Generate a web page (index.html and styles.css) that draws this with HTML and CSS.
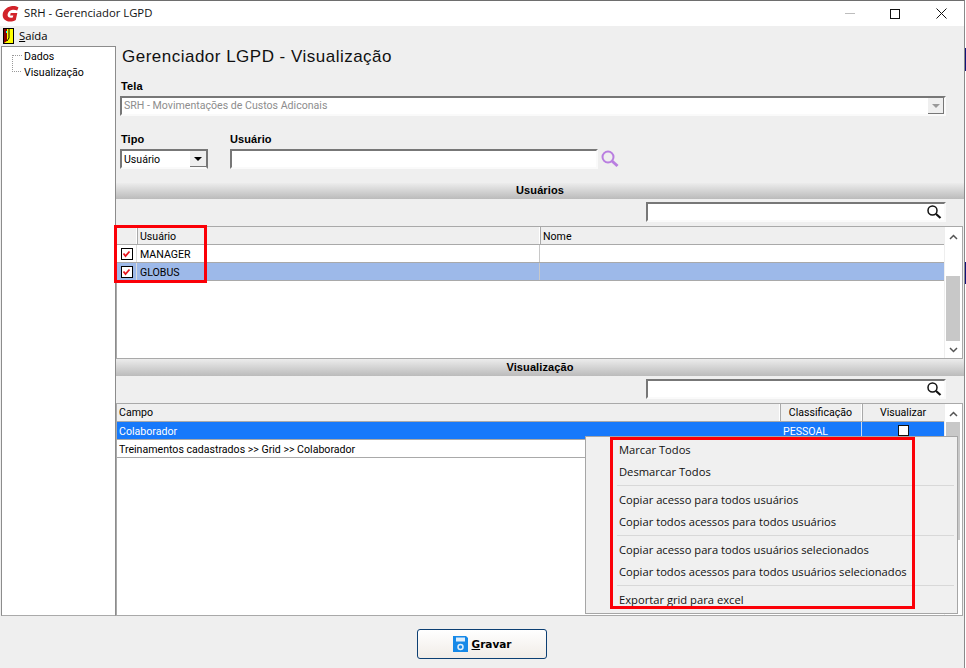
FILE: index.html
```html
<!DOCTYPE html>
<html lang="pt-BR">
<head>
<meta charset="utf-8">
<title>SRH - Gerenciador LGPD</title>
<link rel="stylesheet" href="styles.css">
</head>
<body>
<div class="window">
  <header class="titlebar">
    <svg class="app-logo" width="18" height="18" viewBox="0 0 18 18"><path d="M16.500 2.500C14 1 11.500.800 9 1.300 4.500 2.200 1.200 5.500.700 9.200c-.5 4.300 2.800 7.300 7.300 7.300 2 0 4-.5 5.800-1.600L15.300 8H8.700L8.100 10.500h3.200l-.5 2c-3 .8-5.500-.2-5.200-3C5.900 7 8 5 10.800 4.800c1.600-.1 3 .2 4.400.8z" fill="#d2232a"/></svg>
    <span class="title-text">SRH - Gerenciador LGPD</span>
    <div class="win-controls">
      <span class="wc wc-min"></span>
      <span class="wc wc-max"></span>
      <svg class="wc-close" width="11" height="11" viewBox="0 0 11 11"><path d="M.5.500l10 10M10.500.500l-10 10" stroke="#111" stroke-width="1" fill="none"/></svg>
    </div>
  </header>
  <nav class="menubar">
    <svg width="11" height="16" viewBox="0 0 11 16"><rect width="11" height="16" fill="#000"/><rect x="1" y="1" width="9" height="14" fill="#ffff00"/><path d="M1 1h3v12l-3 2z" fill="#8a0000"/><rect x="3" y="3" width="1" height="2" fill="#0ff"/><path d="M6 1v9l-2 3" stroke="#000" fill="none"/></svg>
    <span class="menu-item"><u>S</u>aída</span>
  </nav>
  <div class="content">
    <aside class="tree">
      <div class="tree-guide"></div>
      <div class="tree-item">Dados</div>
      <div class="tree-item">Visualização</div>
    </aside>
    <main class="main">
      <div class="form">
        <h1 class="heading">Gerenciador LGPD - Visualização</h1>
        <label class="lbl lbl-tela">Tela</label>
        <div class="sunken combo-tela">
          <span class="disabled-text">SRH - Movimentações de Custos Adiconais</span>
          <span class="drop disabled"><i class="arrow"></i></span>
        </div>
        <div class="row-tipo">
          <div class="col-tipo">
            <label class="lbl">Tipo</label>
            <div class="sunken combo-tipo"><span class="combo-value">Usuário</span><span class="drop"><i class="arrow"></i></span></div>
          </div>
          <div class="col-user">
            <label class="lbl">Usuário</label>
            <div class="user-line">
              <div class="sunken input-user"></div>
              <svg width="20" height="20" viewBox="0 0 20 20"><circle cx="8" cy="8" r="5.500" fill="none" stroke="#b97ee0" stroke-width="2"/><path d="M12 12l5.500 5" stroke="#b97ee0" stroke-width="3"/></svg>
            </div>
          </div>
        </div>
      </div>

      <div class="section-bar sb-users">Usuários</div>
      <div class="search-row">
        <div class="sunken search">
          <svg width="16" height="16" viewBox="0 0 16 16"><circle cx="6.500" cy="6.500" r="4.500" fill="none" stroke="#111" stroke-width="1.500"/><path d="M10 10l4.500 4" stroke="#111" stroke-width="2.200"/></svg>
        </div>
      </div>
      <section class="grid grid-users">
        <div class="grid-body">
          <div class="gr head head-users">
            <div class="c c-chk"></div><div class="c c-user">Usuário</div><div class="c c-fill">Nome</div>
          </div>
          <div class="gr">
            <div class="c c-chk"><span class="chk"><svg width="9" height="8" viewBox="0 0 9 8"><path d="M1.500 3.500l2 2.500L7.500 1.500" stroke="#e8141c" stroke-width="1.800" fill="none"/></svg></span></div><div class="c c-user">MANAGER</div><div class="c c-fill"></div>
          </div>
          <div class="gr sel-light">
            <div class="c c-chk"><span class="chk"><svg width="9" height="8" viewBox="0 0 9 8"><path d="M1.500 3.500l2 2.500L7.500 1.500" stroke="#e8141c" stroke-width="1.800" fill="none"/></svg></span></div><div class="c c-user">GLOBUS</div><div class="c c-fill"></div>
          </div>
        </div>
        <div class="scroll scroll-users">
          <svg class="sa" width="9" height="6" viewBox="0 0 9 6"><path d="M1 5l3.500-3.500L8 5" stroke="#555" stroke-width="1.500" fill="none"/></svg>
          <div class="thumb thumb-users"></div>
          <svg class="sa sa-down" width="9" height="6" viewBox="0 0 9 6"><path d="M1 1l3.500 3.500L8 1" stroke="#555" stroke-width="1.500" fill="none"/></svg>
        </div>
      </section>

      <div class="section-bar sb-vis">Visualização</div>
      <div class="search-row">
        <div class="sunken search">
          <svg width="16" height="16" viewBox="0 0 16 16"><circle cx="6.500" cy="6.500" r="4.500" fill="none" stroke="#111" stroke-width="1.500"/><path d="M10 10l4.500 4" stroke="#111" stroke-width="2.200"/></svg>
        </div>
      </div>
      <section class="grid grid-vis">
        <div class="grid-body">
          <div class="gr head">
            <div class="c c-campo">Campo</div><div class="c c-class ctr">Classificação</div><div class="c c-vis ctr">Visualizar</div>
          </div>
          <div class="gr sel-strong">
            <div class="c c-campo">Colaborador</div><div class="c c-class">PESSOAL</div><div class="c c-vis ctr"><span class="box"></span></div>
          </div>
          <div class="gr">
            <div class="c c-campo">Treinamentos cadastrados &gt;&gt; Grid &gt;&gt; Colaborador</div><div class="c c-class"></div><div class="c c-vis"></div>
          </div>
        </div>
        <div class="scroll scroll-vis">
          <svg class="sa" width="9" height="6" viewBox="0 0 9 6"><path d="M1 5l3.500-3.500L8 5" stroke="#555" stroke-width="1.500" fill="none"/></svg>
          <div class="thumb thumb-vis"></div>
        </div>
      </section>
    </main>
  </div>
  <footer class="footer">
    <button class="save" type="button">
      <svg width="15" height="16" viewBox="0 0 15 16"><path d="M0 0h13l2 2v14H0z" fill="#1689e8"/><rect x="3" y="1.500" width="9" height="4" fill="#dfeefb"/><circle cx="7.500" cy="11" r="2.500" fill="none" stroke="#dfeefb" stroke-width="1.500"/></svg>
      <span><u>G</u>ravar</span>
    </button>
  </footer>

  <div class="ctx">
    <div class="ctx-item">Marcar Todos</div>
    <div class="ctx-item">Desmarcar Todos</div>
    <div class="ctx-sep"></div>
    <div class="ctx-item">Copiar acesso para todos usuários</div>
    <div class="ctx-item">Copiar todos acessos para todos usuários</div>
    <div class="ctx-sep"></div>
    <div class="ctx-item">Copiar acesso para todos usuários selecionados</div>
    <div class="ctx-item">Copiar todos acessos para todos usuários selecionados</div>
    <div class="ctx-sep"></div>
    <div class="ctx-item">Exportar grid para excel</div>
  </div>
  <div class="mark mark-users"></div>
  <div class="mark mark-menu"></div>
</div>
<div class="edge"></div>
</body>
</html>
```
FILE: styles.css
```css
* { box-sizing: border-box; }
html, body { margin: 0; padding: 0; }
body {
  width: 966px; height: 668px; overflow: hidden; background: #fff; display: flex;
  font: 10.600px/14px Roboto, "Liberation Sans", sans-serif; color: #000;
}
.window {
  position: relative; width: 965px; height: 668px; background: #efefef;
  border-top: 1px solid #6e6e6e; border-right: 1px solid #8a8a8a;
  display: flex; flex-direction: column;
}
.edge {
  width: 1px; height: 668px;
  background: linear-gradient(#fff 48px, #12127a 48px, #12127a 71px, #fff 71px, #fff 262px, #12127a 262px, #12127a 284px, #fff 284px);
}
.titlebar { height: 25px; background: #fff; display: flex; align-items: center; padding-left: 2px; flex: none; }
.app-logo { margin-right: 4px; }
.title-text { font: 11.300px "Open Sans", sans-serif; color: #111; padding-bottom: 2px; }
.win-controls { margin-left: auto; display: flex; align-items: center; }
.wc-min { width: 10px; height: 1px; background: #bdbdbd; margin-right: 35px; }
.wc-max { width: 10px; height: 10px; border: 1px solid #111; margin-right: 36px; }
.wc-close { margin-right: 17px; }
.menubar { height: 20px; flex: none; display: flex; align-items: center; padding-left: 3px; gap: 5px; background: #efefef; }
.menu-item { font: 11.300px "Open Sans", sans-serif; padding-bottom: 2px; }
.content { flex: none; height: 570px; display: flex; }
.tree { position: relative; width: 115px; margin-left: 1px; background: #fff; border: 1px solid #8c8c8c; border-bottom-color: #aaa; padding: 2px 0 0 22px; flex: none; }
.tree-item { height: 16px; line-height: 15px; }
.tree-guide { position: absolute; left: 10px; top: 8px; width: 9px; height: 17px; border-left: 1px dotted #999; border-bottom: 1px dotted #999; }
.tree-guide::before { content: ""; position: absolute; left: 0; top: 0; width: 9px; border-top: 1px dotted #999; }
.main { flex: 1; min-width: 0; display: flex; flex-direction: column; }
.form { height: 137px; flex: none; padding: 0 0 0 4px; }
.heading { margin: 0; height: 30px; padding: 1px 0 0 2px; font: 400 17px/20px "Liberation Sans", sans-serif; letter-spacing: .49px; color: #111; }
.lbl { display: block; font: 700 11px/14px "Liberation Sans", sans-serif; height: 14px; letter-spacing: .1px; }
.lbl-tela { margin: 3px 0 3px 1px; }
.sunken { background: #fff; border: 2px solid; border-color: #777 #fafafa #fafafa #777; }
.combo-tela { width: 826px; height: 20px; display: flex; align-items: center; padding-left: 2px; }
.disabled-text { color: #8d8d8d; flex: 1; }
.drop { width: 16px; height: 16px; background: #efefef; border-right: 1px solid #777; border-bottom: 1px solid #777; display: flex; align-items: center; justify-content: center; }
.arrow { width: 0; height: 0; border: 4px solid transparent; border-top: 4px solid #000; border-bottom: 0; }
.drop.disabled .arrow { border-top-color: #999; }
.row-tipo { display: flex; margin-top: 16px; }
.col-tipo { width: 110px; }
.col-tipo .lbl, .col-user .lbl { margin-bottom: 3px; }
.col-tipo .lbl { margin-left: 1px; }
.combo-tipo { width: 88px; height: 20px; display: flex; align-items: center; justify-content: space-between; padding-left: 2px; border-right-color: #777; }
.combo-value { padding-top: 1px; }
.combo-tipo .drop { border-right: 0; }
.user-line { display: flex; align-items: center; gap: 2px; }
.input-user { width: 368px; height: 20px; }
.section-bar { height: 17px; flex: none; text-align: center; font: 700 11px/16px "Liberation Sans", sans-serif; letter-spacing: .1px; background: linear-gradient(#ececec, #bbb); }
.sb-users { height: 16px; line-height: 14px; }
.search-row { height: 27px; flex: none; display: flex; justify-content: flex-end; padding: 3px 18px 3px 0; }
.search { width: 300px; height: 20px; display: flex; justify-content: flex-end; align-items: center; padding-right: 2px; }
.grid { display: flex; flex: none; border: 1px solid #a9a9a9; background: #fff; margin: 0 1px 0 0; }
.grid-users { height: 133px; }
.grid-vis { height: 213px; }
.grid-body { flex: 1; min-width: 0; }
.gr { display: flex; height: 18px; border-bottom: 1px solid #a9a9a9; line-height: 18px; }
.gr .c { padding-top: 1px; }
.gr.head { background: #efefef; line-height: 16px; }
.gr.head-users { line-height: 18px; }
.c { padding: 0 3px; overflow: hidden; white-space: nowrap; border-right: 1px solid #a9a9a9; }
.head .c { border-right-color: #fff; box-shadow: 1px 0 0 #a9a9a9; }
.c-chk { width: 20px; display: flex; align-items: center; justify-content: center; padding: 0; border-right: 1px solid #dcdcdc; }
.gr .c-chk { padding-top: 0; }
.c-user { width: 403px; border-right-color: #c8c8c8; }
.c-fill { flex: 1; border-right: 0; }
.c-campo { width: 663px; border-right-color: #c8c8c8; padding-left: 2px; }
.c-class { width: 82px; border-right-color: #c8c8c8; }
.c-vis { flex: 1; border-right: 0; }
.ctr { text-align: center; display: flex; justify-content: center; align-items: center; }
.gr .ctr { padding-top: 0; }
.chk { width: 12px; height: 12px; border: 1px solid #000; background: #fff; display: flex; align-items: center; justify-content: center; }
.box { width: 11px; height: 11px; background: #fff; border: 1px solid #111; }
.sel-light { background: #9db9e9; }
.sel-strong { background: #1779fb; color: #fff; }
.sel-strong .c { border-right-color: #c8d8f0; }
.sel-strong .c:first-child { border-right: 0; }
.scroll { position: relative; width: 18px; flex: none; background: #fff; border-left: 1px solid #eee; display: flex; flex-direction: column; align-items: center; padding-top: 7px; }
.thumb { position: absolute; left: 1px; right: 2px; background: #c8c8c8; }
.thumb-users { top: 49px; height: 65px; }
.thumb-vis { top: 18px; height: 118px; }
.sa-down { position: absolute; bottom: 5px; left: 4px; }
.footer { flex: 1; display: flex; justify-content: center; padding-top: 13px; }
.save { width: 130px; height: 30px; border: 1px solid #0c3f73; border-radius: 3px; background: linear-gradient(#fff, #f1ece7); display: flex; align-items: center; justify-content: center; gap: 4px; padding: 0; font: 700 10.500px "DejaVu Sans", sans-serif; color: #000; }
.ctx { position: absolute; left: 585px; top: 435px; width: 373px; height: 178px; background: #f0f0f0; border: 1px solid #a6a6a6; padding: 2px 0 0 33px; font: 11.200px "Open Sans", sans-serif; color: #111; }
.ctx-item { height: 22px; line-height: 22px; white-space: nowrap; }
.ctx-sep { height: 1px; background: #d8d8d8; margin: 2px 3px 3px -2px; }
.mark { position: absolute; border: 3px solid #fb0007; }
.mark-users { left: 114px; top: 224px; width: 93px; height: 58px; }
.mark-menu { left: 610px; top: 436px; width: 305px; height: 172px; }
```
